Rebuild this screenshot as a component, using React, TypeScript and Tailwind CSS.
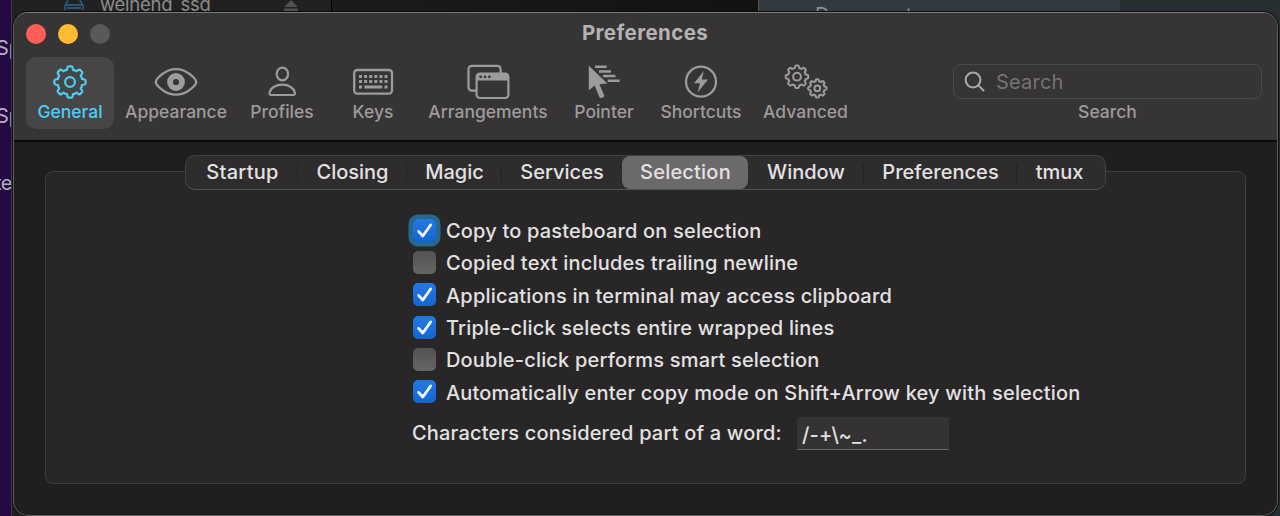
import type { ReactNode } from "react";

function gearPath(cx: number, cy: number, outer: number, inner: number, teeth = 8) {
  const step = (Math.PI * 2) / teeth;
  const pt = (r: number, a: number) =>
    `${(cx + r * Math.sin(a)).toFixed(2)} ${(cy - r * Math.cos(a)).toFixed(2)}`;
  const mid = (outer + inner) / 2;
  let d = "";
  for (let i = 0; i < teeth; i++) {
    const a = i * step;
    d += `${i === 0 ? "M" : "L"}${pt(outer, a - step * 0.12)}`;
    d += `L${pt(outer, a + step * 0.12)}`;
    d += `Q${pt(outer, a + step * 0.21)} ${pt(mid, a + step * 0.25)}`;
    d += `C${pt(inner * 0.97, a + step * 0.29)} ${pt(inner * 0.97, a + step * 0.36)} ${pt(inner * 1.03, a + step * 0.5)}`;
    d += `C${pt(inner * 0.97, a + step * 0.64)} ${pt(inner * 0.97, a + step * 0.71)} ${pt(mid, a + step * 0.75)}`;
    d += `Q${pt(outer, a + step * 0.79)} ${pt(outer, a + step * 0.88)}`;
  }
  return d + "Z";
}

const GearIcon = () => (
  <svg width="36" height="36" viewBox="0 0 36 36" fill="none" stroke="currentColor" strokeWidth="2.2" strokeLinejoin="round">
    <path d={gearPath(18, 18, 15.7, 12.4)} />
    <circle cx="18" cy="18" r="4.9" />
  </svg>
);

const EyeIcon = () => (
  <svg width="44" height="36" viewBox="0 0 44 36" fill="none" stroke="currentColor">
    <path d="M1.8 18C1.8 15.5 10.5 5.2 22 5.2S42.2 15.5 42.2 18S33.5 30.7 22 30.7S1.8 20.5 1.8 18Z" strokeWidth="2.3" />
    <circle cx="22" cy="18" r="6" strokeWidth="5.8" />
  </svg>
);

const PersonIcon = () => (
  <svg width="30" height="36" viewBox="0 0 30 36" fill="none" stroke="currentColor" strokeWidth="2.2" strokeLinejoin="round">
    <ellipse cx="15.4" cy="10" rx="5.7" ry="6.3" />
    <path d="M4.4 31C2.6 31 2.2 30 2.6 28.4C3.8 23.6 9 20.6 15.2 20.6S26.6 23.6 27.8 28.4C28.2 30 27.8 31 26 31Z" />
  </svg>
);

const KeyboardIcon = () => (
  <svg width="42" height="36" viewBox="0 0 42 36" fill="none" stroke="currentColor">
    <rect x="2.2" y="6" width="37.8" height="23.6" rx="3" strokeWidth="2.3" />
    {[12.4, 17.6].map((y) => (
      <path key={y} d={`M7 ${y}H35.6`} strokeWidth="3" strokeDasharray="3 2.1" />
    ))}
    <path d="M7 23H10M32.5 23H35.5M12.4 23H30.2" strokeWidth="3" />
  </svg>
);

const WindowsIcon = () => (
  <svg width="44" height="36" viewBox="0 0 44 36" fill="none" stroke="currentColor" strokeWidth="2.2">
    <path d="M10 26.6H6.2C3.8 26.6 2.5 25.4 2.5 23V5.4C2.5 3 3.8 1.8 6.2 1.8H31C33.4 1.8 34.6 3 34.6 5.4V9" />
    <rect x="10.6" y="9.6" width="31.8" height="24.4" rx="3.2" />
    <path d="M10.6 16.6V12C10.6 10 12 9 13.6 9H39.6C41.4 9 42.4 10.2 42.4 12V16.6Z" fill="currentColor" stroke="none" />
    <g fill="#373435" stroke="none">
      <circle cx="14.6" cy="12.8" r="1.4" />
      <circle cx="19" cy="12.8" r="1.4" />
      <circle cx="23.4" cy="12.8" r="1.4" />
    </g>
  </svg>
);

const PointerIcon = () => (
  <svg width="34" height="36" viewBox="0 0 34 36" fill="none" stroke="currentColor">
    <path d="M1.8 1.8V26.5L7.6 21.6L12.4 33Q13 34.4 14.4 34L16.6 33Q17.8 32.4 17.2 31.2L12.4 20.2L20.4 19.6Z" fill="currentColor" stroke="none" />
    <path d="M8 2.8H19.6M12 7.4H24M16 12H28.4M20.6 16.8H32.6" strokeWidth="2.5" />
  </svg>
);

const BoltIcon = () => (
  <svg width="36" height="36" viewBox="0 0 36 36" fill="none" stroke="currentColor">
    <circle cx="18" cy="17.7" r="15" strokeWidth="2.3" />
    <path d="M20.8 7L11 19.2H17L14.6 28.6L25 15.6H18.8Z" fill="currentColor" stroke="none" />
  </svg>
);

const GearsIcon = () => (
  <svg width="46" height="36" viewBox="0 0 46 36" fill="none" stroke="currentColor" strokeWidth="2" strokeLinejoin="round">
    <path d={gearPath(14, 12.7, 11.3, 8.9)} />
    <circle cx="14" cy="12.7" r="3.9" />
    <path d={gearPath(34.3, 24.3, 9.2, 7.2)} />
    <circle cx="34.3" cy="24.3" r="2.9" />
  </svg>
);

const tools: { label: string; cls: string; icon: ReactNode }[] = [
  { label: "General", cls: "w-[88px] rounded-[10px] bg-[#474546] text-[#4fcdf3]", icon: <GearIcon /> },
  { label: "Appearance", cls: "w-[124px]", icon: <EyeIcon /> },
  { label: "Profiles", cls: "w-[88px]", icon: <PersonIcon /> },
  { label: "Keys", cls: "w-[94px]", icon: <KeyboardIcon /> },
  { label: "Arrangements", cls: "w-[136px]", icon: <WindowsIcon /> },
  { label: "Pointer", cls: "w-[96px]", icon: <PointerIcon /> },
  { label: "Shortcuts", cls: "w-[98px]", icon: <BoltIcon /> },
  { label: "Advanced", cls: "w-[111px]", icon: <GearsIcon /> },
];

const tabs = [
  { label: "Startup", cls: "w-[112px] pl-px tracking-[0.3px]", divider: true },
  { label: "Closing", cls: "w-[109px]", divider: true },
  { label: "Magic", cls: "w-[95px]", divider: true },
  { label: "Services", cls: "w-[120px]", divider: false },
  { label: "Selection", cls: "w-[126px] rounded-[8px] bg-[#6b696a] pl-px tracking-[0.2px]", divider: false },
  { label: "Window", cls: "w-[116px]", divider: true },
  { label: "Preferences", cls: "w-[153px] tracking-[0.05px]", divider: true },
  { label: "tmux", cls: "w-[85px]", divider: false },
];

const options = [
  { label: "Copy to pasteboard on selection", on: true, focus: true },
  { label: "Copied text includes trailing newline", on: false },
  { label: "Applications in terminal may access clipboard", on: true },
  { label: "Triple-click selects entire wrapped lines", on: true },
  { label: "Double-click performs smart selection", on: false },
  { label: "Automatically enter copy mode on Shift+Arrow key with selection", on: true },
];

function Checkbox({ on, focus }: { on: boolean; focus?: boolean }) {
  return (
    <span
      className={`flex h-[23px] w-[23px] shrink-0 items-center justify-center rounded-[5px] ${
        on ? "bg-linear-to-b from-[#2379e4] to-[#1465d3]" : "bg-linear-to-b from-[#535152] to-[#676465]"
      } ${focus ? "ring-[4.5px] ring-[#27688f]" : ""}`}
    >
      {on && (
        <svg width="23" height="23" viewBox="0 0 23 23" fill="none" stroke="#f4f8ff" strokeWidth="2.8" strokeLinecap="round" strokeLinejoin="round">
          <path d="M5.6 12.4L9.8 17L17.6 6" />
        </svg>
      )}
    </span>
  );
}

function Desktop() {
  return (
    <div className="absolute inset-0 flex text-[20px] leading-6">
      <div className="relative w-[11px] shrink-0 overflow-hidden bg-[#230a40] text-[#b9adc6]">
        <span className="absolute top-[36px] left-[-4px]">Sp</span>
        <span className="absolute top-[104px] left-[-4px]">Sp</span>
        <span className="absolute top-[171px] left-[-5px] tracking-[-0.5px]">te</span>
      </div>
      <div className="relative w-[320px] shrink-0 overflow-hidden border-l border-[#3c3a3e] bg-[#212121]">
        <svg className="absolute top-0 left-[51px]" width="22" height="12" viewBox="0 0 22 12" fill="none" stroke="#2d5578" strokeWidth="1.8">
          <path d="M5 0L2 6V10M20 10V6L17 0M2 5H20M4 8H18" />
        </svg>
        <span className="absolute top-[-7px] left-[88px] text-[18.5px] leading-[22px] tracking-[-0.25px] text-[#8b8b8b]">
          weineng_ssd
        </span>
        <svg className="absolute top-0 left-[271px]" width="16" height="12" viewBox="0 0 16 12" fill="#515151">
          <path d="M8 0L15 7H1ZM1 8.5H15V11H1Z" />
        </svg>
      </div>
      <div className="w-[427px] shrink-0 border-l border-black bg-linear-to-r from-[#1b1b1b] to-[#121212]" />
      <div className="relative w-[362px] shrink-0 overflow-hidden border-l border-[#50585b] bg-[#313a3e]">
        <span className="absolute top-[3px] left-[56px] text-[#8a8f91]">Documents</span>
      </div>
      <div className="grow bg-[#262e31]" />
    </div>
  );
}

export default function App() {
  return (
    <div className="relative h-[516px] w-[1280px] overflow-hidden bg-[#111] font-['Inter',sans-serif]">
      <Desktop />
      <div className="absolute top-[12px] left-[13px] flex h-[504px] w-[1265px] flex-col overflow-hidden rounded-[15px] border border-[#5f5d5e] border-t-[#7d7b7c] bg-[#201e1f] shadow-[0_0_0_1px_#0c0c0c]">
        <header className="flex h-[129px] shrink-0 flex-col border-b-2 border-[#0b0a0b] bg-[#373435]">
          <div className="mb-[2px] flex h-[42px] items-center pl-[12px]">
            <div className="flex w-[84px] gap-[12px]">
              <span className="h-5 w-5 rounded-full bg-[#ff5f57]" />
              <span className="h-5 w-5 rounded-full bg-[#febc2e]" />
              <span className="h-5 w-5 rounded-full bg-[#5a5859]" />
            </div>
            <h1 className="mr-[97px] grow pb-px text-center text-[20.5px] leading-none font-bold tracking-[0.4px] text-[#b4b2b3]">
              Preferences
            </h1>
          </div>
          <div className="flex items-start pl-[12px] text-[#9d9b9c]">
            {tools.map((t) => (
              <div key={t.label} className={`flex h-[72px] flex-col items-center pt-[7px] ${t.cls}`}>
                {t.icon}
                <span className="text-[17.5px] leading-[24px] font-medium">{t.label}</span>
              </div>
            ))}
            <div className="mt-[7px] ml-[92px] flex w-[309px] flex-col items-center">
              <div className="mb-px flex h-[35px] w-full items-center rounded-[8px] border-[1.5px] border-[#4a4849] pl-[10px]">
                <svg width="22" height="22" viewBox="0 0 22 22" fill="none" stroke="#aaa8a9" strokeWidth="2" strokeLinecap="round">
                  <circle cx="9" cy="9" r="7.4" />
                  <path d="M14.4 14.4L19.5 19.5" />
                </svg>
                <span className="ml-[10px] text-[20px] tracking-[0.2px] text-[#757374]">Search</span>
              </div>
              <span className="text-[17.5px] leading-[24px] font-medium">Search</span>
            </div>
          </div>
        </header>

        <main className="flex flex-col px-[31px] pt-[13px] text-[20px] text-[#e3e1e2]">
          <nav className="z-10 ml-[140px] flex h-[35px] w-[921px] shrink-0 items-center rounded-[10px] border border-[#434142] border-b-[#545253] bg-[#2e2c2d]">
            {tabs.map((t) => (
              <div key={t.label} className={`relative flex h-[33px] items-center justify-center pb-[2px] font-medium ${t.cls}`}>
                {t.label}
                {t.divider && <span className="absolute top-[8px] right-0 h-[18px] w-px bg-[#232122]" />}
              </div>
            ))}
          </nav>
          <section className="mt-[-19px] h-[313px] w-[1201px] rounded-[8px] border-[1.5px] border-[#403e3f] bg-[#282627] pt-[42px] pl-[367px] font-[450] tracking-[0.18px]">
            {options.map((o) => (
              <label key={o.label} className="flex h-[32.3px] items-center gap-[10px] whitespace-nowrap">
                <Checkbox on={o.on} focus={o.focus} />
                <span className="pt-[2px]">{o.label}</span>
              </label>
            ))}
            <div className="mt-[9px] flex items-center">
              <span className="-ml-px w-[385px] whitespace-nowrap">Characters considered part of a word:</span>
              <span className="flex h-[33px] w-[152px] items-center border border-[#343233] border-b-[#6a6869] bg-[#343233] pt-[3px] pl-[4px]">
                /-+\~_.
              </span>
            </div>
          </section>
        </main>
      </div>
    </div>
  );
}
